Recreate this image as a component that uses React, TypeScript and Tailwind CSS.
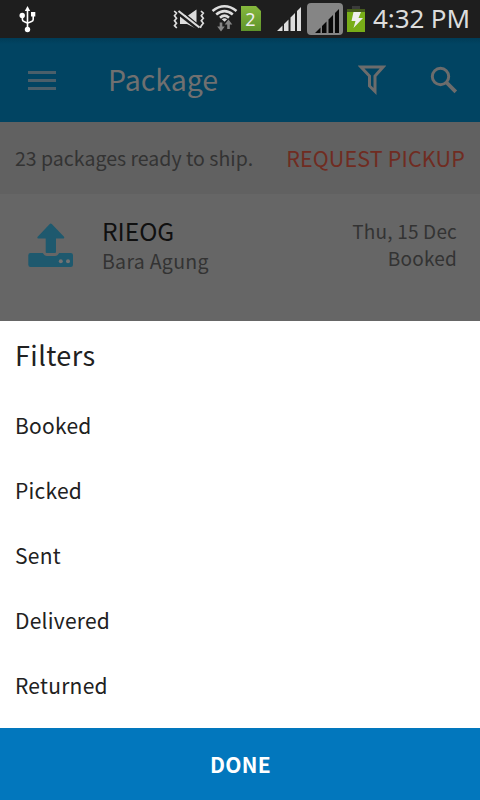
import React from "react";

function UsbIcon() {
  return (
    <svg width="18" height="28" viewBox="0 0 18 28" fill="none" stroke="#fff" strokeWidth="1.6">
      <path d="M8.5 4v20M3.4 10v4.5q0 1.5 1.6 2l3.5 1.7 4-1.8q1.7-.6 1.7-2V9" />
      <path d="M5.8 6 8.5 1l2.7 5z" fill="#fff" stroke="none" />
      <circle cx="3.2" cy="10.5" r="2.7" fill="#fff" stroke="none" />
      <path d="M12 7h4.3v4.5H12z" fill="#fff" stroke="none" />
      <circle cx="8.5" cy="24.5" r="2.7" fill="#fff" stroke="none" />
    </svg>
  );
}

function VibrateIcon() {
  return (
    <svg width="32" height="22" viewBox="0 0 32 22" fill="none">
      <path d="M1.2 2l2.300 2.200-2 2.500 2 2.500-2 2.500 2 2.500-2 2.500 2.300 2.300M28 2l2.300 2.200-2 2.500 2 2.500-2 2.500 2 2.500-2 2.500-1 2.300" stroke="#ddd" strokeWidth="1.7" />
      <path d="M7 6h5l11 10v3.500L14 15H7zM15 6.500 23.500.5v13z" fill="#ddd" />
      <path d="M5 4 26 20.500" stroke="#1e1e1e" strokeWidth="3" />
      <path d="M5.500 2 26.500 18.500" stroke="#ddd" strokeWidth="2.200" />
    </svg>
  );
}

function WifiIcon() {
  return (
    <svg width="27" height="28" viewBox="0 0 27 28" fill="none">
      <path d="M1.500 7Q13.500-2.500 25.500 7M5.200 10.500Q13.500 3.700 21.800 10.500M9 13.700Q13.500 9.700 18 13.700" stroke="#ddd" strokeWidth="2.600" />
      <path d="m10.800 15.200q2.700-2 5.400 0l-2.700 2.500z" fill="#ddd" />
      <path d="M10 18.500v5M17.500 19.500V25" stroke="#858585" strokeWidth="2.600" />
      <path d="M6.200 22.500h7.600L10 27.500zM13.700 20.500h7.600l-3.800-5z" fill="#858585" />
    </svg>
  );
}

function SignalIcon({ color }: { color: string }) {
  return (
    <svg width="27" height="27" viewBox="0 0 27 27" fill={color}>
      <path d="M1 25 6.500 19.500V25zM8 18l4.500-4.500V25H8zM14.500 11.500 19 7v18h-4.500zM21 5l4-4V25h-4z" />
    </svg>
  );
}

function StatusBar() {
  return (
    <div className="flex h-[38px] shrink-0 items-start bg-[#1e1e1e] text-[#dcdcdc]">
      <div className="ml-[19px] mt-[5px]"><UsbIcon /></div>
      <div className="ml-[136px] mt-[9px]"><VibrateIcon /></div>
      <div className="ml-[6px] mt-[4px]"><WifiIcon /></div>
      <div className="ml-[3px] mt-[6px] h-[25px] w-5 bg-[linear-gradient(#86b83d,#5f942b)] pr-px text-center font-['Noto_Sans',sans-serif] text-[18px] leading-[26px] text-[#eee] [clip-path:polygon(0_0,75%_0,100%_20%,100%_100%,0_100%)]">2</div>
      <div className="ml-[15px] mt-[6px] h-[26px] w-[27px]"><SignalIcon color="#ddd" /></div>
      <div className="ml-[4px] mt-[3px] h-8 w-9 rounded-[4px] bg-[#858585] pl-[7px] pt-[5px]"><SignalIcon color="#080808" /></div>
      <svg className="ml-[4px] mt-[6px]" width="18" height="26" viewBox="0 0 18 26">
        <path d="M5 0h8v3H5z" fill="#3b3b3b" />
        <path d="M0 3h18v23H0z" fill="#78ad18" />
        <path d="M0 3h18v3H0z" fill="#455b1c" />
        <path d="M6.500 6H14l-2.500 6H16L6.500 22l2-7H4.500z" fill="#eee" />
      </svg>
      <span className="ml-[8px] whitespace-nowrap font-['Noto_Sans',sans-serif] text-[26px] leading-[36px] tracking-[-0.1px]">4:32 PM</span>
    </div>
  );
}

function Header() {
  return (
    <header className="flex h-[84px] shrink-0 items-center bg-[#014462] bg-[linear-gradient(#003c57,#014462_6px)] text-[#707070]">
      <div className="ml-7 flex w-7 flex-col gap-[5px]">
        <div className="h-[3px] bg-[#4a5f6a]" />
        <div className="h-[3px] bg-[#4a5f6a]" />
        <div className="h-[3px] bg-[#4a5f6a]" />
      </div>
      <h1 className="-mt-[3px] ml-[52px] text-[28.5px] leading-10 tracking-[0px]">Package</h1>
      <svg className="ml-auto" width="28" height="32" viewBox="0 0 28 32" fill="none" stroke="#6c6c6c" strokeWidth="3">
        <path d="M3 3h22l-8 9v15.500l-5.500-5.500V12z" />
      </svg>
      <svg className="ml-[44px] mr-[22px]" width="28" height="28" viewBox="0 0 28 28" fill="none" stroke="#6c6c6c" strokeWidth="3">
        <circle cx="10.500" cy="10.500" r="8.200" />
        <path d="m16.500 16.500 9.300 9.300" strokeWidth="3.800" />
      </svg>
    </header>
  );
}

function UploadIcon() {
  return (
    <svg className="mt-px" width="46" height="45" viewBox="0 0 46 45" fill="#1e596e">
      <path d="M22.700.5Q23.300.5 24 1.200L36 13.700Q37 15.500 34.700 15.500H28v13.500q0 1-1 1h-8.300q-1 0-1-1V15.500H11Q8.500 15.500 9.700 13.700L21.500 1.200Q22.200.5 22.700.5z" />
      <path d="M2.500 30h12.300q1.500 3 4 3h8.400q2.500 0 4-3h11.600Q45 30 45 32.200v9.600Q45 44 42.800 44H2.500Q.3 44 .3 41.800v-9.600Q.3 30 2.500 30z" />
      <circle cx="32.800" cy="38.300" r="2" fill="#737373" />
      <circle cx="40" cy="38.300" r="2" fill="#737373" />
    </svg>
  );
}

const filters = ["Booked", "Picked", "Sent", "Delivered", "Returned"];

export default function App() {
  return (
    <div className="flex h-[800px] w-[480px] flex-col overflow-hidden bg-[#666] font-['Noto_Sans_CJK_SC','Noto_Sans',sans-serif]">
      <StatusBar />
      <Header />
      <div className="flex h-[72px] shrink-0 items-center justify-between bg-[#616161] pl-[15px] pr-[15px] whitespace-nowrap">
        <span className="-mt-px text-[19.5px] tracking-[0.02px] text-[#333]">23 packages ready to ship.</span>
        <span className="text-[21.5px] tracking-[0.15px] text-[#702c21]">REQUEST PICKUP</span>
      </div>
      <div className="flex h-[127px] shrink-0 pl-7 pr-[23px] pt-[28px]">
        <UploadIcon />
        <div className="ml-[28px]">
          <div className="-mt-[7px] text-[24.5px] leading-8 text-[#101010]">RIEOG</div>
          <div className="text-[19.5px] leading-[28px] tracking-[0.3px] text-[#333]">Bara Agung</div>
        </div>
        <div className="-mt-[5px] ml-auto text-right text-[19px] leading-[27px] tracking-[0.2px] text-[#333]">
          <div>Thu, 15 Dec</div>
          <div>Booked</div>
        </div>
      </div>
      <section className="flex h-[407px] shrink-0 flex-col bg-white pl-[15px] text-[#212121]">
        <h2 className="h-[73px] text-[27px] leading-[67px] tracking-[0.4px]">Filters</h2>
        {filters.map((name) => (
          <div key={name} className="h-[65px] text-[21px] leading-[62px] tracking-[0.25px]">{name}</div>
        ))}
      </section>
      <button className="h-[72px] shrink-0 bg-[#0277bd] pl-px text-[21px] font-bold leading-[73px] tracking-[0.3px] text-white">DONE</button>
    </div>
  );
}
